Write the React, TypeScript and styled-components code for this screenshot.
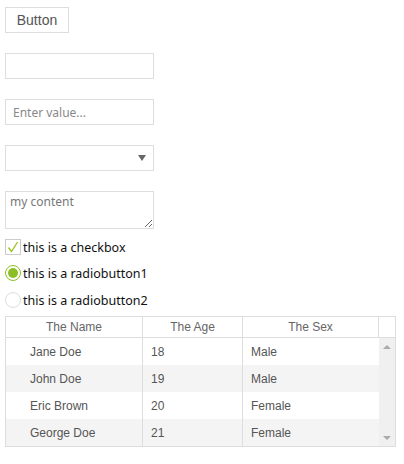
import React from 'react'
import styled, { createGlobalStyle } from 'styled-components'

const GlobalStyle = createGlobalStyle`
  body {
    margin: 0;
    background: #fff;
    font-family: "Liberation Sans", Arial, sans-serif;
  }
`

const Page = styled.div`
  display: flex;
  flex-direction: column;
  align-items: flex-start;
  padding: 7px 0 0 5px;
`

const Button = styled.button`
  width: 64px;
  height: 26px;
  padding: 0;
  background: #fff;
  border: 1px solid #ddd;
  color: #555;
  font-family: "Liberation Sans", Arial, sans-serif;
  font-size: 14px;
  cursor: pointer;
`

const Input = styled.input`
  box-sizing: border-box;
  width: 149px;
  height: 26px;
  margin-top: ${(p: { $top: number }) => p.$top}px;
  padding: 0 7px;
  border: 1px solid #ddd;
  outline: none;
  font-family: "Noto Sans", "Open Sans", sans-serif;
  font-size: 12px;
  color: #333;
  &::placeholder {
    color: #888;
  }
`

const Select = styled.div`
  box-sizing: border-box;
  width: 149px;
  height: 26px;
  margin-top: 20px;
  border: 1px solid #ddd;
  display: flex;
  align-items: center;
  justify-content: flex-end;
  padding-right: 7px;
`

const TextArea = styled.textarea`
  box-sizing: border-box;
  width: 149px;
  height: 38px;
  margin: 20px 0 0;
  padding: 2px 4px;
  border: 1px solid #ddd;
  outline: none;
  font-family: "Noto Sans", "Open Sans", sans-serif;
  font-size: 12px;
  line-height: 16px;
  color: #777;
`

const OptionRow = styled.label<{ $top: number }>`
  display: flex;
  align-items: center;
  gap: 2px;
  height: 16px;
  margin-top: ${(p) => p.$top}px;
  font-family: "Noto Sans", "Open Sans", sans-serif;
  font-size: 12.5px;
  color: #111;
`

const CheckBox = styled.span`
  box-sizing: border-box;
  width: 16px;
  height: 16px;
  border: 1px solid #ccc;
  display: flex;
  align-items: center;
  justify-content: center;
`

const Radio = styled.span<{ $checked?: boolean }>`
  box-sizing: border-box;
  width: 16px;
  height: 16px;
  border-radius: 50%;
  border: 1px solid ${(p) => (p.$checked ? '#8cbf26' : '#ddd')};
  display: flex;
  align-items: center;
  justify-content: center;
  &::after {
    content: '';
    display: ${(p) => (p.$checked ? 'block' : 'none')};
    width: 10px;
    height: 10px;
    border-radius: 50%;
    background: #8cbf26;
  }
`

const Table = styled.div`
  box-sizing: border-box;
  width: 391px;
  margin-top: 8px;
  border: 1px solid #ddd;
  font-size: 12px;
`

const HeadRow = styled.div`
  display: grid;
  grid-template-columns: 137px 100px 136px 1fr;
  height: 20px;
  border-bottom: 1px solid #ddd;
`

const HeadCell = styled.div`
  display: flex;
  align-items: center;
  justify-content: center;
  color: #666;
  border-right: 1px solid #ddd;
  &:last-child {
    border-right: none;
  }
`

const Body = styled.div`
  display: flex;
`

const Rows = styled.div`
  width: 373px;
`

const Row = styled.div<{ $alt: boolean }>`
  display: grid;
  grid-template-columns: 137px 100px 136px;
  height: 27px;
  background: ${(p) => (p.$alt ? '#f4f4f4' : '#fff')};
`

const Cell = styled.div<{ $pad: number }>`
  display: flex;
  align-items: center;
  padding-left: ${(p) => p.$pad}px;
  color: #555;
  border-right: 1px solid #ddd;
  &:last-child {
    border-right: none;
  }
`

const ScrollBar = styled.div`
  flex: 1;
  background: #f0f0f0;
  display: flex;
  flex-direction: column;
  justify-content: space-between;
  align-items: center;
  padding: 7px 0 6px;
`

const Arrow = styled.span<{ $down?: boolean }>`
  width: 0;
  height: 0;
  border-left: 4px solid transparent;
  border-right: 4px solid transparent;
  ${(p) => (p.$down ? 'border-top: 4px solid #aaa;' : 'border-bottom: 4px solid #aaa;')}
`

const people = [
  { name: 'Jane Doe', age: 18, sex: 'Male' },
  { name: 'John Doe', age: 19, sex: 'Male' },
  { name: 'Eric Brown', age: 20, sex: 'Female' },
  { name: 'George Doe', age: 21, sex: 'Female' },
]

const App: React.FC = () => {
  return (
    <>
      <GlobalStyle />
      <Page>
        <Button>Button</Button>
        <Input $top={20} />
        <Input $top={20} placeholder="Enter value..." />
        <Select>
          <svg width="8" height="6" viewBox="0 0 8 6">
            <path d="M0 0 L8 0 L4 6 Z" fill="#666" />
          </svg>
        </Select>
        <TextArea defaultValue="my content" />
        <OptionRow $top={10}>
          <CheckBox>
            <svg width="12" height="12" viewBox="0 0 12 12">
              <path d="M1.5 6.5 L4.5 10.5 L10.5 1" fill="none" stroke="#9bc41c" strokeWidth="1.3" />
            </svg>
          </CheckBox>
          this is a checkbox
        </OptionRow>
        <OptionRow $top={10}>
          <Radio $checked />
          this is a radiobutton1
        </OptionRow>
        <OptionRow $top={11}>
          <Radio />
          this is a radiobutton2
        </OptionRow>
        <Table>
          <HeadRow>
            <HeadCell>The Name</HeadCell>
            <HeadCell>The Age</HeadCell>
            <HeadCell>The Sex</HeadCell>
            <HeadCell />
          </HeadRow>
          <Body>
            <Rows>
              {people.map((p, i) => (
                <Row key={p.name} $alt={i % 2 === 1}>
                  <Cell $pad={24}>{p.name}</Cell>
                  <Cell $pad={8}>{p.age}</Cell>
                  <Cell $pad={8}>{p.sex}</Cell>
                </Row>
              ))}
            </Rows>
            <ScrollBar>
              <Arrow />
              <Arrow $down />
            </ScrollBar>
          </Body>
        </Table>
      </Page>
    </>
  )
}

export default App
